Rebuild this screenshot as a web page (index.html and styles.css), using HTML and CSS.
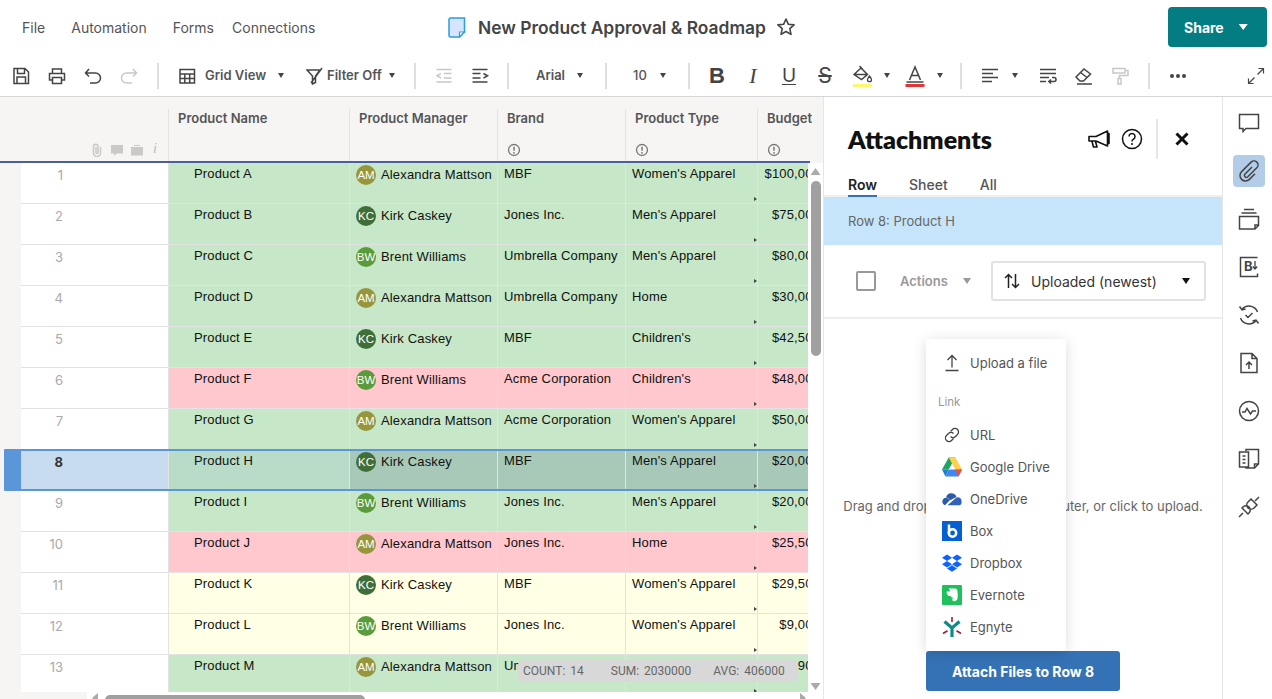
FILE: index.html
```html
<!DOCTYPE html>
<html lang="en">
<head>
<meta charset="utf-8">
<title>New Product Approval &amp; Roadmap</title>
<link rel="stylesheet" href="styles.css">
</head>
<body>
<header class="topbar">
  <nav class="nav">
    <span class="nav-item">File</span>
    <span class="nav-item nav-a">Automation</span>
    <span class="nav-item nav-f">Forms</span>
    <span class="nav-item nav-c">Connections</span>
  </nav>
  <div class="title-group">
    <svg class="doc" width="18" height="21" viewBox="0 0 18 21"><path d="M2.500 1h14v14l-5 5h-9a1.500 1.500 0 0 1-1.500-1.500V2.500A1.500 1.500 0 0 1 2.500 1z" fill="#d5e5fb" stroke="#2c9ddd" stroke-width="1.500"/><path d="M16.500 15h-5v5z" fill="#fff" stroke="#2c9ddd" stroke-width="1.200"/></svg>
    <h1 class="title">New Product Approval &amp; Roadmap</h1>
    <svg class="star" width="20" height="20" viewBox="0 0 20 20"><path d="M10 2l2.400 5.300 5.700.6-4.300 3.800 1.200 5.700L10 14.500l-5 2.900 1.200-5.700L1.900 7.900l5.700-.6z" fill="none" stroke="#444" stroke-width="1.600" stroke-linejoin="round"/></svg>
  </div>
  <button class="share"><span>Share</span><i class="caret-w"></i></button>
</header>

<div class="toolbar">
  <span class="tool"><svg width="20" height="20" viewBox="0 0 20 20" class="ic"><path d="M3 2.500h11l3.500 3.500v11.500H3zM6.500 2.500v5h7v-5M6 17.500v-6.500h8.500v6.500"/></svg></span>
  <span class="tool"><svg width="20" height="20" viewBox="0 0 20 20" class="ic"><path d="M5.500 7V3h9v4M5.500 14H2.500V7.500h15V14h-3M5.500 11.500h9v6h-9z"/></svg></span>
  <span class="tool"><svg width="20" height="20" viewBox="0 0 20 20" class="ic"><path d="M2.500 7h10a4.800 4.800 0 0 1 0 10H7M6 3L2.500 7 6 10.500"/></svg></span>
  <span class="tool"><svg width="20" height="20" viewBox="0 0 20 20" class="ic off"><path d="M17.500 7h-10a4.800 4.800 0 0 0 0 10H13M14 3l3.500 4-3.500 3.500"/></svg></span>
  <i class="sep s1"></i>
  <svg class="tb-ic m-g" width="18" height="18" viewBox="0 0 18 18"><path class="ic-p" d="M2 2.500h14.500v13.500H2zM2 7h14.500M2 11.500h14.500M6.800 7v9M11.700 7v9"/></svg>
  <span class="label l-grid">Grid View</span><i class="caret"></i>
  <svg class="tb-ic m-f" width="18" height="18" viewBox="0 0 18 18"><path class="ic-p" d="M1 3h13l-4.500 6v6.500l-3 1.500V9zM16 1L5 16"/></svg>
  <span class="label l-filter">Filter Off</span><i class="caret"></i>
  <i class="sep s2"></i>
  <span class="tool t-out"><svg width="20" height="20" viewBox="0 0 20 20" class="ic off"><path d="M2.500 3.500h15M10 7.500h7.500M10 12h7.500M2.500 16h15M7 7.500L3 9.800 7 12"/></svg></span>
  <span class="tool"><svg width="20" height="20" viewBox="0 0 20 20" class="ic"><path d="M2.500 3.500h15M2.500 7.500h8M2.500 12h8M2.500 16h15M13.500 7.500l4 2.300-4 2.200"/></svg></span>
  <i class="sep s3"></i>
  <span class="label l-arial">Arial</span><i class="caret"></i>
  <i class="sep s4"></i>
  <span class="label l-ten">10</span><i class="caret"></i>
  <i class="sep s5"></i>
  <span class="tool t-b">B</span>
  <span class="tool t-i">I</span>
  <span class="tool t-u">U</span>
  <span class="tool t-s">S</span>
  <span class="tool t-fill"><svg width="22" height="24" viewBox="0 0 22 24"><path class="ic-p" d="M2 10.500L9 4l6.500 6.500-6 5zM7.500 2l3 3M2 10.500h13"/><path d="M17.500 12c1.500 2 2 3 2 3.700a2 2 0 0 1-4 0c0-.7.500-1.700 2-3.700z" fill="none" stroke="#444" stroke-width="1.300"/><rect x="1" y="20" width="19" height="3" fill="#fdf76e"/></svg></span>
  <i class="caret c-fill"></i>
  <span class="tool t-a"><svg width="22" height="24" viewBox="0 0 22 24"><path class="ic-p" d="M2.500 18h17M5.500 16L11 3l5.500 13M7.500 11.500h7"/><rect x="1.500" y="20" width="19" height="3" fill="#e23636"/></svg></span>
  <i class="caret c-a"></i>
  <i class="sep s6"></i>
  <span class="tool t-al"><svg width="20" height="20" viewBox="0 0 20 20" class="ic"><path d="M2 3.500h16M2 7.500h11M2 11.500h16M2 15.500h10"/></svg></span>
  <i class="caret c-al"></i>
  <span class="tool t-wr"><svg width="20" height="20" viewBox="0 0 20 20" class="ic"><path d="M2 3.500h16M2 7.500h16M2 11.500h9M2 15.500h6M11 15.500h5a2 2 0 0 0 0-4h-2M13 13.500l-2.200 2 2.200 2"/></svg></span>
  <span class="tool"><svg width="20" height="20" viewBox="0 0 20 20" class="ic"><path d="M2 11l8-8 6.500 5-7 7H6zM6.500 6.500l6.500 5M3 18h15"/></svg></span>
  <span class="tool"><svg width="20" height="20" viewBox="0 0 20 20" class="ic off"><path d="M3 2.500h12v4.500H3zM15 4.500h3v5H9.500v3M8 12.500h3V18H8z"/></svg></span>
  <i class="sep s7"></i>
  <span class="tool t-dots"><svg width="20" height="20" viewBox="0 0 20 20"><circle cx="4" cy="10" r="2" fill="#444"/><circle cx="10" cy="10" r="2" fill="#444"/><circle cx="16" cy="10" r="2" fill="#444"/></svg></span>
  <span class="tool t-exp"><svg width="18" height="18" viewBox="0 0 18 18" class="ic"><path d="M10.500 7.500L16.500 1.500M11.500 1.500h5v5M7.500 10.500l-6 6M1.500 11.500v5h5" stroke-width="1.200"/></svg></span>
</div>

<main class="main">
  <section class="sheet">
    <div class="grid-head">
      <div class="hd-corner">
        <svg width="14" height="14" viewBox="0 0 14 14"><path d="M10.500 4v6a3.500 3.500 0 0 1-7 0V3.500a2.200 2.200 0 0 1 4.500 0V9.500a1 1 0 0 1-2 0V4" fill="none" stroke="#c9c9c9" stroke-width="1.500"/></svg>
        <svg width="14" height="14" viewBox="0 0 14 14"><path d="M1 2h12v8.500H6.500L4 13v-2.500H1z" fill="#c9c9c9"/></svg>
        <svg width="14" height="14" viewBox="0 0 14 14"><path d="M1 4h12v8.500H1zM4 3h6v-1H4z" fill="#c9c9c9"/></svg>
        <span class="hd-i">i</span>
      </div>
      <div class="hd hd-name"><b>Product Name</b></div>
      <div class="hd hd-mgr"><b>Product Manager</b></div>
      <div class="hd hd-brand"><b>Brand</b><svg class="lock" width="14" height="14" viewBox="0 0 14 14"><circle cx="7" cy="7" r="5.500" fill="none" stroke="#777" stroke-width="1.300"/><path d="M7 3.800v4" stroke="#777" stroke-width="1.500"/><circle cx="7" cy="9.800" r=".9" fill="#777"/></svg></div>
      <div class="hd hd-type"><b>Product Type</b><svg class="lock" width="14" height="14" viewBox="0 0 14 14"><circle cx="7" cy="7" r="5.500" fill="none" stroke="#777" stroke-width="1.300"/><path d="M7 3.800v4" stroke="#777" stroke-width="1.500"/><circle cx="7" cy="9.800" r=".9" fill="#777"/></svg></div>
      <div class="hd hd-bud"><b>Budget</b><svg class="lock" width="14" height="14" viewBox="0 0 14 14"><circle cx="7" cy="7" r="5.500" fill="none" stroke="#777" stroke-width="1.300"/><path d="M7 3.800v4" stroke="#777" stroke-width="1.500"/><circle cx="7" cy="9.800" r=".9" fill="#777"/></svg></div>
    </div>
    <div class="grid-body">
      <div class="rows">
        <div class="row green"><span class="num">1</span><span class="c name">Product A</span><span class="c mgr"><i class="av am">AM</i>Alexandra Mattson</span><span class="c brand">MBF</span><span class="c type">Women's Apparel</span><span class="c bud">$100,000</span></div>
        <div class="row green"><span class="num">2</span><span class="c name">Product B</span><span class="c mgr"><i class="av kc">KC</i>Kirk Caskey</span><span class="c brand">Jones Inc.</span><span class="c type">Men's Apparel</span><span class="c bud">$75,000</span></div>
        <div class="row green"><span class="num">3</span><span class="c name">Product C</span><span class="c mgr"><i class="av bw">BW</i>Brent Williams</span><span class="c brand">Umbrella Company</span><span class="c type">Men's Apparel</span><span class="c bud">$80,000</span></div>
        <div class="row green"><span class="num">4</span><span class="c name">Product D</span><span class="c mgr"><i class="av am">AM</i>Alexandra Mattson</span><span class="c brand">Umbrella Company</span><span class="c type">Home</span><span class="c bud">$30,000</span></div>
        <div class="row green"><span class="num">5</span><span class="c name">Product E</span><span class="c mgr"><i class="av kc">KC</i>Kirk Caskey</span><span class="c brand">MBF</span><span class="c type">Children's</span><span class="c bud">$42,500</span></div>
        <div class="row red"><span class="num">6</span><span class="c name">Product F</span><span class="c mgr"><i class="av bw">BW</i>Brent Williams</span><span class="c brand">Acme Corporation</span><span class="c type">Children's</span><span class="c bud">$48,000</span></div>
        <div class="row green"><span class="num">7</span><span class="c name">Product G</span><span class="c mgr"><i class="av am">AM</i>Alexandra Mattson</span><span class="c brand">Acme Corporation</span><span class="c type">Women's Apparel</span><span class="c bud">$50,000</span></div>
        <div class="row green selected"><span class="num">8</span><span class="c name">Product H</span><span class="c mgr"><i class="av kc">KC</i>Kirk Caskey</span><span class="c brand">MBF</span><span class="c type">Men's Apparel</span><span class="c bud">$20,000</span><i class="sel-frame"></i></div>
        <div class="row green"><span class="num">9</span><span class="c name">Product I</span><span class="c mgr"><i class="av bw">BW</i>Brent Williams</span><span class="c brand">Jones Inc.</span><span class="c type">Men's Apparel</span><span class="c bud">$20,000</span></div>
        <div class="row red"><span class="num">10</span><span class="c name">Product J</span><span class="c mgr"><i class="av am">AM</i>Alexandra Mattson</span><span class="c brand">Jones Inc.</span><span class="c type">Home</span><span class="c bud">$25,500</span></div>
        <div class="row yellow"><span class="num">11</span><span class="c name">Product K</span><span class="c mgr"><i class="av kc">KC</i>Kirk Caskey</span><span class="c brand">MBF</span><span class="c type">Women's Apparel</span><span class="c bud">$29,500</span></div>
        <div class="row yellow"><span class="num">12</span><span class="c name">Product L</span><span class="c mgr"><i class="av bw">BW</i>Brent Williams</span><span class="c brand">Jones Inc.</span><span class="c type">Women's Apparel</span><span class="c bud">$9,000</span></div>
        <div class="row green"><span class="num">13</span><span class="c name">Product M</span><span class="c mgr"><i class="av am">AM</i>Alexandra Mattson</span><span class="c brand">Umbrella Company</span><span class="c type">Women's Apparel</span><span class="c bud">$8,900</span></div>
      </div>
      <div class="vscroll"><i class="tri-up"></i><i class="thumb-v"></i><i class="tri-down"></i></div>
    </div>
    <div class="hscroll"><i class="tri-left"></i><i class="thumb-h"></i><i class="tri-right"></i></div>
    <div class="status"><span>COUNT:&nbsp;14</span><span>SUM:&nbsp;2030000</span><span>AVG:&nbsp;406000</span></div>
  </section>

  <aside class="panel">
    <div class="panel-head">
      <h2 class="panel-title">Attachments</h2>
      <svg class="ph-ic" width="24" height="24" viewBox="0 0 24 24"><path d="M2 9.500h7L20.500 4v15L9 14H2zM5 14.500l1.500 5.500h3.500L8.500 14.500M20.500 6.500h1.500v10h-1.500" fill="none" stroke="#111" stroke-width="1.600" stroke-linejoin="round"/></svg>
      <svg class="ph-q" width="24" height="24" viewBox="0 0 24 24"><circle cx="12" cy="12" r="9.500" fill="none" stroke="#111" stroke-width="1.500"/><path d="M9 9.500a3 3 0 1 1 4.500 2.600c-1 .6-1.500 1.100-1.500 2.400" fill="none" stroke="#111" stroke-width="1.500"/><circle cx="12" cy="17" r="1" fill="#111"/></svg>
      <i class="ph-div"></i>
      <svg class="ph-x" width="24" height="24" viewBox="0 0 24 24"><path d="M6.500 6.500l11 11M17.500 6.500l-11 11" stroke="#111" stroke-width="3"/></svg>
    </div>
    <div class="tabs"><span class="tab active">Row</span><span class="tab">Sheet</span><span class="tab">All</span></div>
    <div class="band">Row 8: Product H</div>
    <div class="actions">
      <i class="check"></i>
      <span class="act-label">Actions</span>
      <i class="act-caret"></i>
      <div class="select">
        <svg width="18" height="18" viewBox="0 0 18 18"><path d="M5.500 16V2.500M2 6l3.500-3.500L9 6M12.500 2v13.500M9 12l3.500 3.500L16 12" fill="none" stroke="#222" stroke-width="1.500"/></svg>
        <span class="sel-text">Uploaded (newest)</span>
        <i class="sel-caret"></i>
      </div>
    </div>
    <div class="panel-body">
      <p class="drag">Drag and drop files from your computer, or click to upload.</p>
      <div class="menu">
        <div class="mi mi-up"><svg width="20" height="20" viewBox="0 0 20 20"><path d="M10 14.500V2.500M5.500 7L10 2.500 14.500 7M3.500 17.500h13" fill="none" stroke="#444" stroke-width="1.300"/></svg><span>Upload a file</span></div>
        <div class="menu-link">Link</div>
        <div class="mi"><svg width="20" height="20" viewBox="0 0 20 20"><path d="M8.500 6.500l2-2a3.500 3.500 0 0 1 5 5l-2 2a3.500 3.500 0 0 1-5 0M11.500 13.500l-2 2a3.500 3.500 0 0 1-5-5l2-2a3.500 3.500 0 0 1 5 0" fill="none" stroke="#444" stroke-width="1.300"/></svg><span>URL</span></div>
        <div class="mi"><svg width="20" height="20" viewBox="0 0 20 20"><path d="M6.700.5h6.600L6.700 12.500H0z" fill="#1fa463"/><path d="M6.700.5h6.600L20 12.500h-6.700z" fill="#ffd04b"/><path d="M3.500 19.500h13l3.500-7H6.700z" fill="#4286f5"/><path d="M0 12.500h6.700l-3.200 7z" fill="#1b7fd0"/><path d="M13.300 12.500H20l-3.500 7z" fill="#e8533f"/></svg><span>Google Drive</span></div>
        <div class="mi"><svg width="20" height="20" viewBox="0 0 20 20"><path d="M4 8.500A5.500 5.500 0 0 1 14.500 8a3.500 3.500 0 0 1-1 .5L7.500 11.500A3.500 3.500 0 0 0 4 8.500z" fill="#2a5aa8"/><path d="M4 8.800a3.500 3.500 0 0 1 3.500 2.700L3 16.200A3.800 3.800 0 0 1 4 8.800z" fill="#2a5aa8"/><path d="M14.500 8.500a3.700 3.700 0 0 1 5 3.800 3.600 3.600 0 0 1-1.500 3.900H5.500z" fill="#2f62b8"/></svg><span>OneDrive</span></div>
        <div class="mi"><svg width="20" height="20" viewBox="0 0 20 20"><rect width="20" height="20" fill="#0561d1"/><path d="M7 3.500v9" stroke="#fff" stroke-width="2.500"/><circle cx="10.500" cy="12" r="3.700" fill="none" stroke="#fff" stroke-width="2.500"/></svg><span>Box</span></div>
        <div class="mi"><svg width="20" height="20" viewBox="0 0 20 20"><path d="M5 1.500L10 4.800 5 8 0 4.800zM15 1.500L20 4.800 15 8 10 4.800zM5 8l5 3.200-5 3.300-5-3.300zM15 8l5 3.200-5 3.300-5-3.300zM5 15.500l5-3.200 5 3.200-5 3.200z" fill="#0f62fe"/></svg><span>Dropbox</span></div>
        <div class="mi"><svg width="20" height="20" viewBox="0 0 20 20"><rect width="20" height="20" rx="1" fill="#20c05c"/><path d="M6.500 3.500h6.500c1.500 0 2.500 1 2.500 3 .3 3 .3 5.500 0 7-.4 1.800-1.800 2.800-3.300 2.800-1.300 0-2-.8-2-1.700s.8-1.600 1.800-1.500c-1.500-.5-3-.5-3.300-2-2 0-3.700-.5-4-3V6.500h2.500c.7 0 .8-.4.800-1z" fill="#fff"/></svg><span>Evernote</span></div>
        <div class="mi"><svg width="20" height="20" viewBox="0 0 20 20"><path d="M2.500 4.500L10 11l7.500-6.500M10 10.500V20" fill="none" stroke="#0d8c8a" stroke-width="3.200"/><path d="M10 0v5M1 16.500l4.500-2.800M19 16.500l-4.500-2.800" stroke="#9b2048" stroke-width="1.600"/></svg><span>Egnyte</span></div>
      </div>
    </div>
    <div class="panel-foot"><button class="attach">Attach Files to Row 8</button></div>
  </aside>

  <aside class="rail">
    <span class="ri"><svg width="22" height="22" viewBox="0 0 22 22" class="ric"><path d="M1.500 2.500h19v14H8l-3 3v-3H1.500z"/></svg></span>
    <span class="ri active"><svg width="22" height="22" viewBox="0 0 22 22" class="ric"><path d="M14 7L6.800 14.200a2 2 0 0 0 2.800 2.800L18.800 7.800a4 4 0 0 0-5.700-5.700L3.600 11.600a5.500 5.500 0 0 0 7.800 7.800L17 13.800"/></svg></span>
    <span class="ri"><svg width="22" height="22" viewBox="0 0 22 22" class="ric"><path d="M6 1.500h10M3.500 5h15M1.500 8.500h19v9l-3.500 3.500H1.500zM20.500 17H17v4"/></svg></span>
    <span class="ri"><svg width="22" height="22" viewBox="0 0 22 22" class="ric"><path d="M19.500 1.500h-17v19h17v-3"/><path d="M17 5v7.500M14.800 10.500l2.200 2.500 2.200-2.500" stroke-width="1.300"/><text x="6" y="14.500" class="b-glyph">B</text></svg></span>
    <span class="ri"><svg width="22" height="22" viewBox="0 0 22 22" class="ric"><path d="M4 5.500A9 9 0 0 1 19.500 8M18 16.500A9 9 0 0 1 2.500 14M1.500 2.500L4 6l3.500-1M20.500 19.500L18 16l-3.500 1M7.500 11l2.500 2.500 4.500-4.500"/></svg></span>
    <span class="ri"><svg width="22" height="22" viewBox="0 0 22 22" class="ric"><path d="M3 1.500h11l5 5v14H3zM14 1.500v5h5M11 17V10.500M8 13l3-3 3 3"/></svg></span>
    <span class="ri"><svg width="22" height="22" viewBox="0 0 22 22" class="ric"><circle cx="11" cy="11" r="9.500"/><path d="M4 12h3l2-3.500 3.500 5.500 2-3h3.500"/></svg></span>
    <span class="ri"><svg width="22" height="22" viewBox="0 0 22 22" class="ric"><path d="M8 3V1.500h12.500V16l-4 4H8v-1M20.500 16h-4v4M1.500 4h9v15h-9zM4.500 8h3M4.500 11.500h3M4.500 15h3"/></svg></span>
    <span class="ri"><svg width="22" height="22" viewBox="0 0 22 22" class="ric"><path d="M1 21l4-4M21 1l-4 4M13 3l6 6-3 3a4 4 0 0 1-6-6zM9 10l3 3M4 12l6 6 1-1a4 4 0 0 0-6-6z"/></svg></span>
  </aside>
</main>
</body>
</html>
```
FILE: styles.css
```css
* { box-sizing: border-box; }
html, body { margin: 0; height: 100%; overflow: hidden; }
body { width: 1272px; height: 699px; background: #fff; font-family: Inter, "Liberation Sans", sans-serif; color: #555; }
i { font-style: normal; display: block; }
button { font-family: inherit; border: 0; cursor: pointer; }

.topbar { height: 55px; display: flex; align-items: center; padding: 0 5px 1px 22px; }
.nav { display: flex; font-size: 14px; color: #555; width: 293px; }
.nav-item { white-space: nowrap; }
.nav-a { margin-left: 26px; }
.nav-f { margin-left: 26px; }
.nav-c { margin-left: 18px; }
.title-group { display: flex; align-items: center; margin-left: 133px; }
.title { margin: 0 0 0 12px; font-size: 17.400px; font-weight: 600; color: #444; white-space: nowrap; }
.star { margin-left: 10px; }
.share { margin-left: auto; width: 99px; height: 40px; background: #047d82; color: #fff; border-radius: 4px; font-size: 14px; font-weight: 700; display: flex; align-items: center; padding: 0 0 0 16px; }
.caret-w { margin-left: 15px; width: 9px; height: 6px; background: #fff; clip-path: polygon(0 0, 100% 0, 50% 100%); }

.toolbar { height: 42px; border-bottom: 1px solid #d6d6d6; display: flex; align-items: center; padding-left: 3px; }
.tool { width: 36px; height: 30px; flex: none; display: flex; align-items: center; justify-content: center; color: #444; }
.ic, .ic-p { fill: none; stroke: #444; stroke-width: 1.500; }
.ic path { fill: none; }
.ic.off { stroke: #c8c8c8; }
.sep { width: 2px; height: 26px; background: #dedede; flex: none; }
.s1 { margin-left: 10px; }
.s2 { margin-left: 18px; }
.s3 { margin-left: 9px; }
.s4 { margin-left: 21px; }
.s5 { margin-left: 21px; }
.s6 { margin-left: 16px; }
.s7 { margin-left: 10px; }
.tb-ic { flex: none; }
.m-g { margin-left: 19px; }
.m-f { margin-left: 21px; }
.label { font-size: 13px; font-weight: 600; color: #555; flex: none; white-space: nowrap; margin-bottom: 2px; }
.l-grid { margin-left: 9px; width: 72px; }
.l-filter { margin-left: 3px; width: 61px; }
.l-arial { margin-left: 27px; width: 40px; }
.l-ten { margin-left: 26px; width: 26px; font-weight: 500; }
.caret { width: 6px; height: 5px; flex: none; background: #444; clip-path: polygon(0 0, 100% 0, 50% 100%); margin: 0 1px; }
.t-out { margin-left: 10px; }
.t-b { margin-left: 9px; font: 700 22px "Liberation Sans", sans-serif; }
.t-i { font: italic 400 22px "Liberation Serif", serif; }
.t-u { font: 400 19px Inter, sans-serif; text-decoration: underline; text-underline-offset: 2px; }
.t-s { font: 400 21px Inter, sans-serif; text-decoration: line-through; }
.t-fill { margin-left: 2px; }
.c-fill { margin-left: 3px; }
.t-a { margin-left: 6px; }
.c-a { margin-left: 4px; }
.t-al { margin-left: 10px; }
.c-al { margin-left: 4px; }
.t-wr { margin-left: 11px; }
.t-dots { margin-left: 10px; }
.t-exp { margin-left: auto; width: 32px; }

.main { height: 602px; display: flex; }
.sheet { position: relative; width: 823px; flex: none; background: #f6f5f4; }
.grid-head { height: 66px; display: flex; padding-top: 12px; border-bottom: 2px solid #4a5f9e; width: 810px; }
.hd-corner { width: 168px; display: flex; align-items: flex-end; justify-content: flex-end; gap: 6px; padding: 0 8px 4px 0; flex: none; }
.hd-i { font: italic 14px "Liberation Serif", serif; color: #bbb; width: 10px; text-align: center; }
.hd { flex: none; border-left: 1px solid #e3e3e3; position: relative; font-size: 13px; color: #555; padding-top: 1px; }
.hd b { font-weight: 600; }
.hd-name { width: 181px; padding-left: 9px; }
.hd-mgr { width: 148px; padding-left: 9px; }
.hd-brand { width: 128px; padding-left: 9px; }
.hd-type { width: 132px; padding-left: 9px; }
.hd-bud { width: 53px; padding-left: 9px; }
.lock { position: absolute; left: 9px; bottom: 4px; }

.grid-body { height: 529px; display: flex; }
.rows { width: 808px; flex: none; overflow: hidden; font: 13px/15px "Liberation Sans", sans-serif; color: #111; letter-spacing: .15px; }
.row { height: 41px; display: flex; position: relative; padding-left: 21px; }
.num { width: 147px; flex: none; background: #fff; border-bottom: 1px solid #e2e2e2; padding: 5px 105px 0 0; font: 13px/15px Inter, sans-serif; color: #aaa; text-align: right; letter-spacing: 0; }
.c { flex: none; height: 41px; border-left: 1px solid #e3e3e3; border-bottom: 1px solid #e3e3e3; padding-top: 3px; white-space: nowrap; position: relative; overflow: hidden; }
.name { width: 181px; padding-left: 25px; }
.mgr { width: 148px; padding: 2px 0 0 6px; display: flex; align-items: flex-start; line-height: 20px; }
.brand { width: 128px; padding-left: 6px; }
.type { width: 132px; padding-left: 6px; }
.type::after { content: ""; position: absolute; right: 0; bottom: 2px; border-left: 3px solid #444; border-top: 2px solid transparent; border-bottom: 2px solid transparent; }
.bud { width: 66px; text-align: right; padding-right: 3px; }
.green .c { background: #c6e7c8; }
.red .c { background: #ffc8ce; }
.yellow .c { background: #ffffe6; }
.av { width: 20px; height: 20px; border-radius: 50%; flex: none; margin-right: 5px; color: #fff; font: 11.500px/20px "Liberation Sans", sans-serif; text-align: center; letter-spacing: 0; }
.am { background: #97963d; }
.kc { background: #3f6e39; }
.bw { background: #5a9b3c; }

.selected .num { background: #c8dcf0; font-weight: 700; color: #333; }
.selected .c { background: #a8c9b8; }
.selected .name { background: #b9dcc8; }
.sel-frame { position: absolute; left: 4px; right: 0; top: -1px; bottom: 0; border: 2px solid #5a96d8; border-right: 0; border-radius: 2px 0 0 2px; pointer-events: none; }
.sel-frame::before { content: ""; position: absolute; left: -2px; top: -2px; bottom: -2px; width: 17px; background: #5a96d8; border-radius: 2px 0 0 2px; }

.vscroll { width: 15px; background: #fff; flex: none; display: flex; flex-direction: column; align-items: center; padding: 5px 0 2px 0; }
.tri-up { width: 10px; height: 7px; background: #aaa; clip-path: polygon(50% 0, 100% 100%, 0 100%); flex: none; }
.thumb-v { width: 10px; height: 175px; background: #a0a0a0; border-radius: 5px; margin-top: 6px; flex: none; }
.tri-down { width: 10px; height: 7px; background: #aaa; clip-path: polygon(0 0, 100% 0, 50% 100%); margin-top: auto; flex: none; }

.hscroll { height: 7px; margin-left: 87px; background: #fff; display: flex; align-items: flex-start; position: relative; overflow: hidden; }
.tri-left { width: 6px; height: 10px; margin: 1px 0 0 5px; background: #aaa; clip-path: polygon(100% 0, 100% 100%, 0 50%); flex: none; }
.thumb-h { width: 260px; height: 10px; margin: 3px 0 0 7px; background: #a0a0a0; border-radius: 5px; flex: none; }
.tri-right { width: 6px; height: 10px; margin: 1px 0 0 435px; background: #aaa; clip-path: polygon(0 0, 100% 50%, 0 100%); flex: none; }

.status { position: absolute; left: 518px; top: 563px; width: 280px; height: 22px; background: #d8d8d8; border-radius: 5px; display: flex; align-items: center; padding-left: 5px; font: 12px Roboto, sans-serif; color: #666; word-spacing: 2px; white-space: nowrap; }
.status span:nth-child(2) { margin-left: 27px; }
.status span:nth-child(3) { margin-left: 22px; }

.panel { width: 399px; flex: none; border-left: 1px solid #e6e6e6; display: flex; flex-direction: column; }
.panel-head { height: 78px; padding: 7px 28px 1px 24px; display: flex; align-items: center; }
.panel-title { margin: 0 auto 0 0; font: 800 25px Lato, sans-serif; color: #111; white-space: nowrap; }
.ph-q { margin-left: 9px; }
.ph-div { width: 2px; height: 40px; background: #e6e6e6; margin-left: 12px; }
.ph-x { margin-left: 12px; }
.tabs { height: 22px; padding-left: 24px; display: flex; gap: 32px; border-bottom: 2px solid #f0f0f0; font-size: 14px; font-weight: 500; color: #555; line-height: 20px; }
.tab.active { color: #222; font-weight: 600; height: 22px; border-bottom: 2px solid #3572b5; }
.band { height: 48px; padding-left: 24px; background: #c7e5fa; display: flex; align-items: center; font-size: 13px; color: #666; }
.actions { height: 74px; border-bottom: 2px solid #eee; display: flex; align-items: center; padding-left: 32px; flex: none; }
.check { width: 20px; height: 20px; border: 2px solid #999; border-radius: 2px; }
.act-label { margin-left: 24px; width: 63px; font-size: 13px; font-weight: 600; color: #999; }
.act-caret { width: 8px; height: 6px; background: #999; clip-path: polygon(0 0, 100% 0, 50% 100%); }
.select { margin-left: 20px; width: 215px; height: 40px; border: 2px solid #e2e2e2; border-radius: 3px; display: flex; align-items: center; padding-left: 10px; font-size: 14px; color: #333; }
.sel-text { margin-left: 10px; white-space: nowrap; }
.sel-caret { margin-left: auto; margin-right: 14px; width: 8px; height: 6px; background: #111; clip-path: polygon(0 0, 100% 0, 50% 100%); }
.panel-body { flex: 1; position: relative; text-align: center; }
.drag { margin: 0; padding-top: 179px; font-size: 13px; line-height: 16px; color: #666; white-space: nowrap; }
.menu { position: absolute; left: 102px; top: 20px; width: 140px; height: 312px; background: #fff; box-shadow: 0 2px 14px rgba(0,0,0,.14); border-radius: 3px; padding-top: 8px; text-align: left; }
.mi { height: 32px; display: flex; align-items: center; padding-left: 16px; gap: 8px; font-size: 13px; color: #555; white-space: nowrap; }
.mi svg { flex: none; }
.menu-link { height: 40px; padding: 15px 0 0 12px; font-size: 11.500px; line-height: 16px; color: #999; }
.panel-foot { height: 48px; display: flex; justify-content: center; }
.attach { width: 194px; height: 40px; background: #3572b5; color: #fff; font-size: 14px; font-weight: 700; border-radius: 3px; }

.rail { flex: 1; border-left: 1px solid #e6e6e6; display: flex; flex-direction: column; align-items: center; padding: 10px 0 0 2px; }
.ri { width: 32px; height: 32px; margin-bottom: 16px; border-radius: 4px; display: flex; align-items: center; justify-content: center; flex: none; }
.ri.active { background: #b3cde9; }
.ric { fill: none; stroke: #444; stroke-width: 1.500; }
.b-glyph { font: 700 13px Inter, sans-serif; fill: #444; stroke: none; }
```
